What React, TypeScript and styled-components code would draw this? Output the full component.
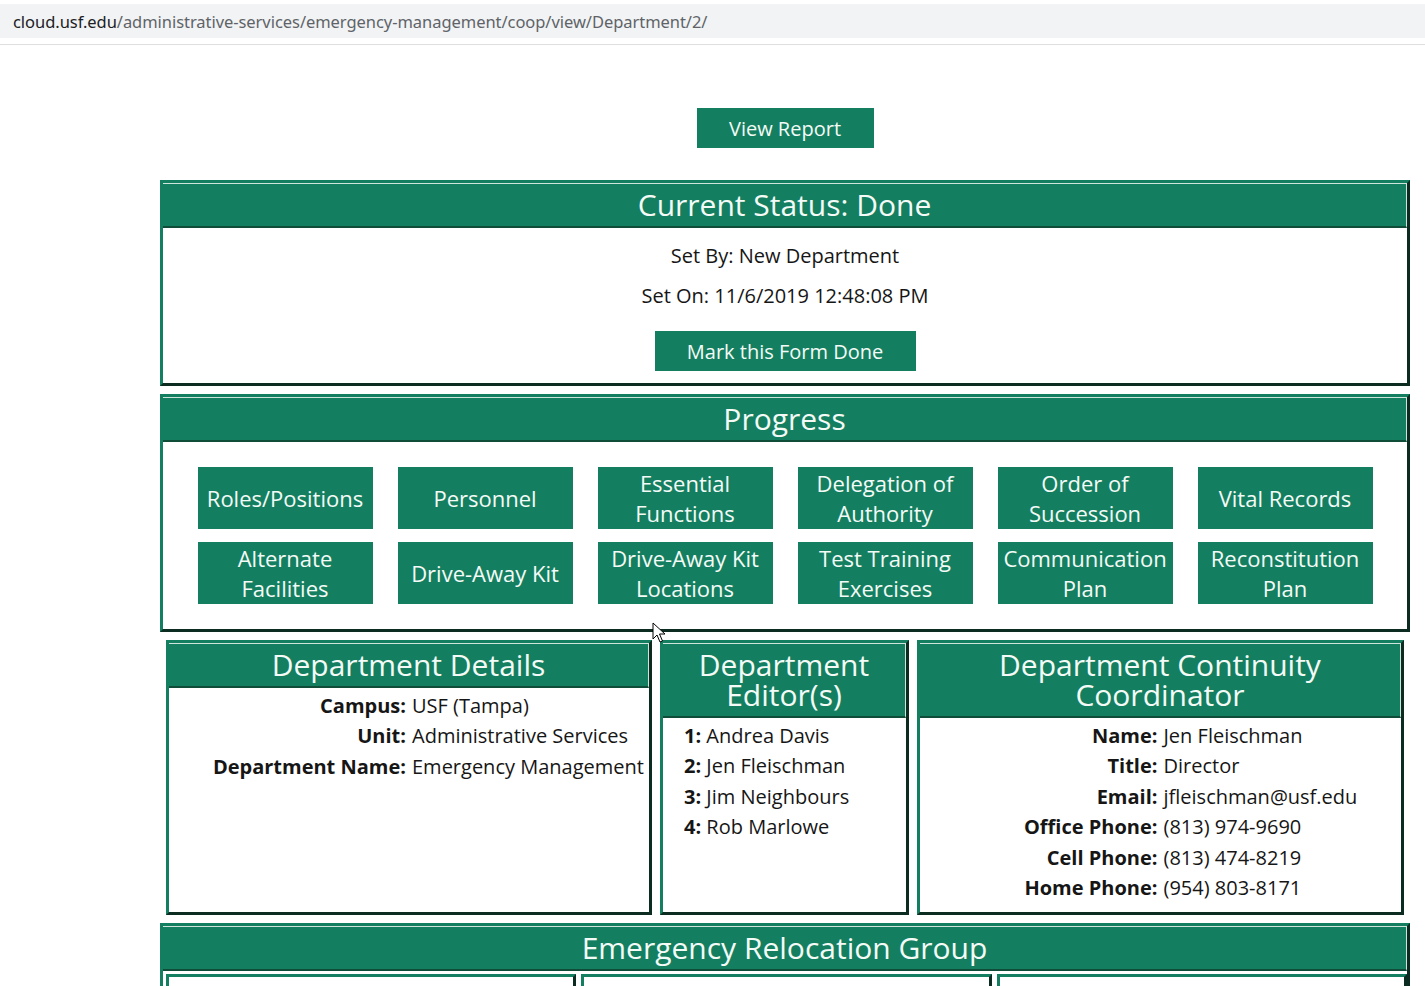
import React from 'react';
import styled, { createGlobalStyle } from 'styled-components';

const GREEN = '#147f60';
const DARK = '#0c2b21';

const GlobalStyle = createGlobalStyle`
  html, body {
    margin: 0;
    padding: 0;
    background: #fff;
    font-family: 'Open Sans', 'Noto Sans', sans-serif;
    color: #161616;
  }
`;

const Chrome = styled.div`
  padding-top: 4px;
  height: 40px;
  border-bottom: 1px solid #dedfe1;
  position: relative;
`;

const UrlBar = styled.div`
  height: 34px;
  background: #f1f3f4;
  display: flex;
  align-items: center;
  padding-left: 13px;
  font-family: 'Noto Sans', 'Open Sans', sans-serif;
  font-size: 16.5px;
  letter-spacing: -0.05px;
  color: #5f6368;
`;

const Host = styled.span`
  color: #202124;
`;

const Page = styled.main`
  width: 1250px;
  margin-left: 160px;
  padding-top: 63px;
`;

const Centered = styled.div<{ $mt?: number }>`
  display: flex;
  justify-content: center;
  margin-top: ${(p) => p.$mt || 0}px;
`;

const GreenButton = styled.button<{ $w: number }>`
  width: ${(p) => p.$w}px;
  height: 40px;
  border: none;
  background: ${GREEN};
  color: #f4fbf7;
  font-family: 'Open Sans', sans-serif;
  font-size: 20px;
  cursor: pointer;
`;

const Panel = styled.section<{ $mt?: number }>`
  margin-top: ${(p) => p.$mt || 0}px;
  border: 3px solid ${GREEN};
  border-right-color: ${DARK};
  border-bottom-color: ${DARK};
  background: #fff;
  display: flex;
  flex-direction: column;
`;

const Header = styled.h2`
  margin: 0;
  background: ${GREEN};
  color: #f4fbf7;
  font-weight: 400;
  font-size: 30px;
  line-height: 30px;
  text-align: center;
  padding: 6px 8px 6px;
  border-top: 1px solid #cfe5dc;
  border-right: 1px solid #cfe5dc;
  border-bottom: 2px solid #0f4d39;
`;

const StatusBody = styled.div`
  padding: 8px 0 12px;
  text-align: center;
  font-size: 20px;
  line-height: 40px;
`;

const ProgressGrid = styled.div`
  display: grid;
  grid-template-columns: repeat(6, 175px);
  column-gap: 25px;
  row-gap: 13px;
  justify-content: center;
  padding: 25px 0 25px;
`;

const StepButton = styled.button`
  height: 62px;
  border: none;
  background: ${GREEN};
  color: #f4fbf7;
  font-family: 'Open Sans', sans-serif;
  font-size: 22px;
  line-height: 30px;
  padding: 0 2px;
  cursor: pointer;
`;

const InfoRow = styled.div`
  display: flex;
  gap: 8px;
  margin: 8px 0 0 6px;
  height: 275px;
`;

const Box = styled(Panel)<{ $w: number }>`
  width: ${(p) => p.$w}px;
  box-sizing: border-box;
`;

const Pairs = styled.div`
  display: grid;
  grid-template-columns: 1fr 1fr;
  column-gap: 6px;
  padding-top: 3px;
  font-size: 20px;
  line-height: 30.4px;
  white-space: nowrap;
`;

const Label = styled.b`
  text-align: right;
  font-weight: 700;
`;

const Value = styled.span`
  text-align: left;
`;

const EditorList = styled.ol`
  list-style: none;
  margin: 0;
  padding: 3px 0 0 21px;
  font-size: 20px;
  line-height: 30.4px;
`;

const SubRow = styled.div`
  display: flex;
  gap: 5px;
  padding: 3px 0 0 3px;
`;

const SubBox = styled.div`
  flex: 1;
  height: 120px;
  border: 3px solid ${GREEN};
  border-right-color: ${DARK};
  border-bottom-color: ${DARK};
`;

const Cursor = styled.svg`
  position: absolute;
  left: 652px;
  top: 622px;
  pointer-events: none;
`;

const steps = [
  'Roles/Positions',
  'Personnel',
  'Essential Functions',
  'Delegation of Authority',
  'Order of Succession',
  'Vital Records',
  'Alternate Facilities',
  'Drive-Away Kit',
  'Drive-Away Kit Locations',
  'Test Training Exercises',
  'Communication Plan',
  'Reconstitution Plan',
];

const details: [string, string][] = [
  ['Campus:', 'USF (Tampa)'],
  ['Unit:', 'Administrative Services'],
  ['Department Name:', 'Emergency Management'],
];

const editors = ['Andrea Davis', 'Jen Fleischman', 'Jim Neighbours', 'Rob Marlowe'];

const coordinator: [string, string][] = [
  ['Name:', 'Jen Fleischman'],
  ['Title:', 'Director'],
  ['Email:', 'jfleischman@usf.edu'],
  ['Office Phone:', '(813) 974-9690'],
  ['Cell Phone:', '(813) 474-8219'],
  ['Home Phone:', '(954) 803-8171'],
];

function PairList({ rows }: { rows: [string, string][] }) {
  return (
    <Pairs>
      {rows.map(([k, v]) => (
        <React.Fragment key={k}>
          <Label>{k}</Label>
          <Value>{v}</Value>
        </React.Fragment>
      ))}
    </Pairs>
  );
}

export default function App() {
  return (
    <>
      <GlobalStyle />
      <Chrome>
        <UrlBar>
          <Host>cloud.usf.edu</Host>/administrative-services/emergency-management/coop/view/Department/2/
        </UrlBar>
      </Chrome>
      <Page>
        <Centered>
          <GreenButton $w={177}>View Report</GreenButton>
        </Centered>

        <Panel $mt={32}>
          <Header>Current Status: Done</Header>
          <StatusBody>
            <div>Set By: New Department</div>
            <div>Set On: 11/6/2019 12:48:08 PM</div>
            <Centered $mt={15}>
              <GreenButton $w={261}>Mark this Form Done</GreenButton>
            </Centered>
          </StatusBody>
        </Panel>

        <Panel $mt={8}>
          <Header>Progress</Header>
          <ProgressGrid>
            {steps.map((s) => (
              <StepButton key={s}>{s}</StepButton>
            ))}
          </ProgressGrid>
        </Panel>

        <InfoRow>
          <Box $w={486}>
            <Header>Department Details</Header>
            <PairList rows={details} />
          </Box>
          <Box $w={249}>
            <Header>
              Department
              <br />
              Editor(s)
            </Header>
            <EditorList>
              {editors.map((e, i) => (
                <li key={e}>
                  <b>{i + 1}:</b> {e}
                </li>
              ))}
            </EditorList>
          </Box>
          <Box $w={487}>
            <Header>
              Department Continuity
              <br />
              Coordinator
            </Header>
            <PairList rows={coordinator} />
          </Box>
        </InfoRow>

        <Panel $mt={8}>
          <Header>Emergency Relocation Group</Header>
          <SubRow>
            <SubBox />
            <SubBox />
            <SubBox />
          </SubRow>
        </Panel>
      </Page>
      <Cursor width="14" height="22" viewBox="0 0 14 22">
        <path d="M1 1 L1 17 L5 13 L8 20 L10.5 19 L7.5 12 L13 12 Z" fill="#fff" stroke="#000" strokeWidth="1" />
      </Cursor>
    </>
  );
}
